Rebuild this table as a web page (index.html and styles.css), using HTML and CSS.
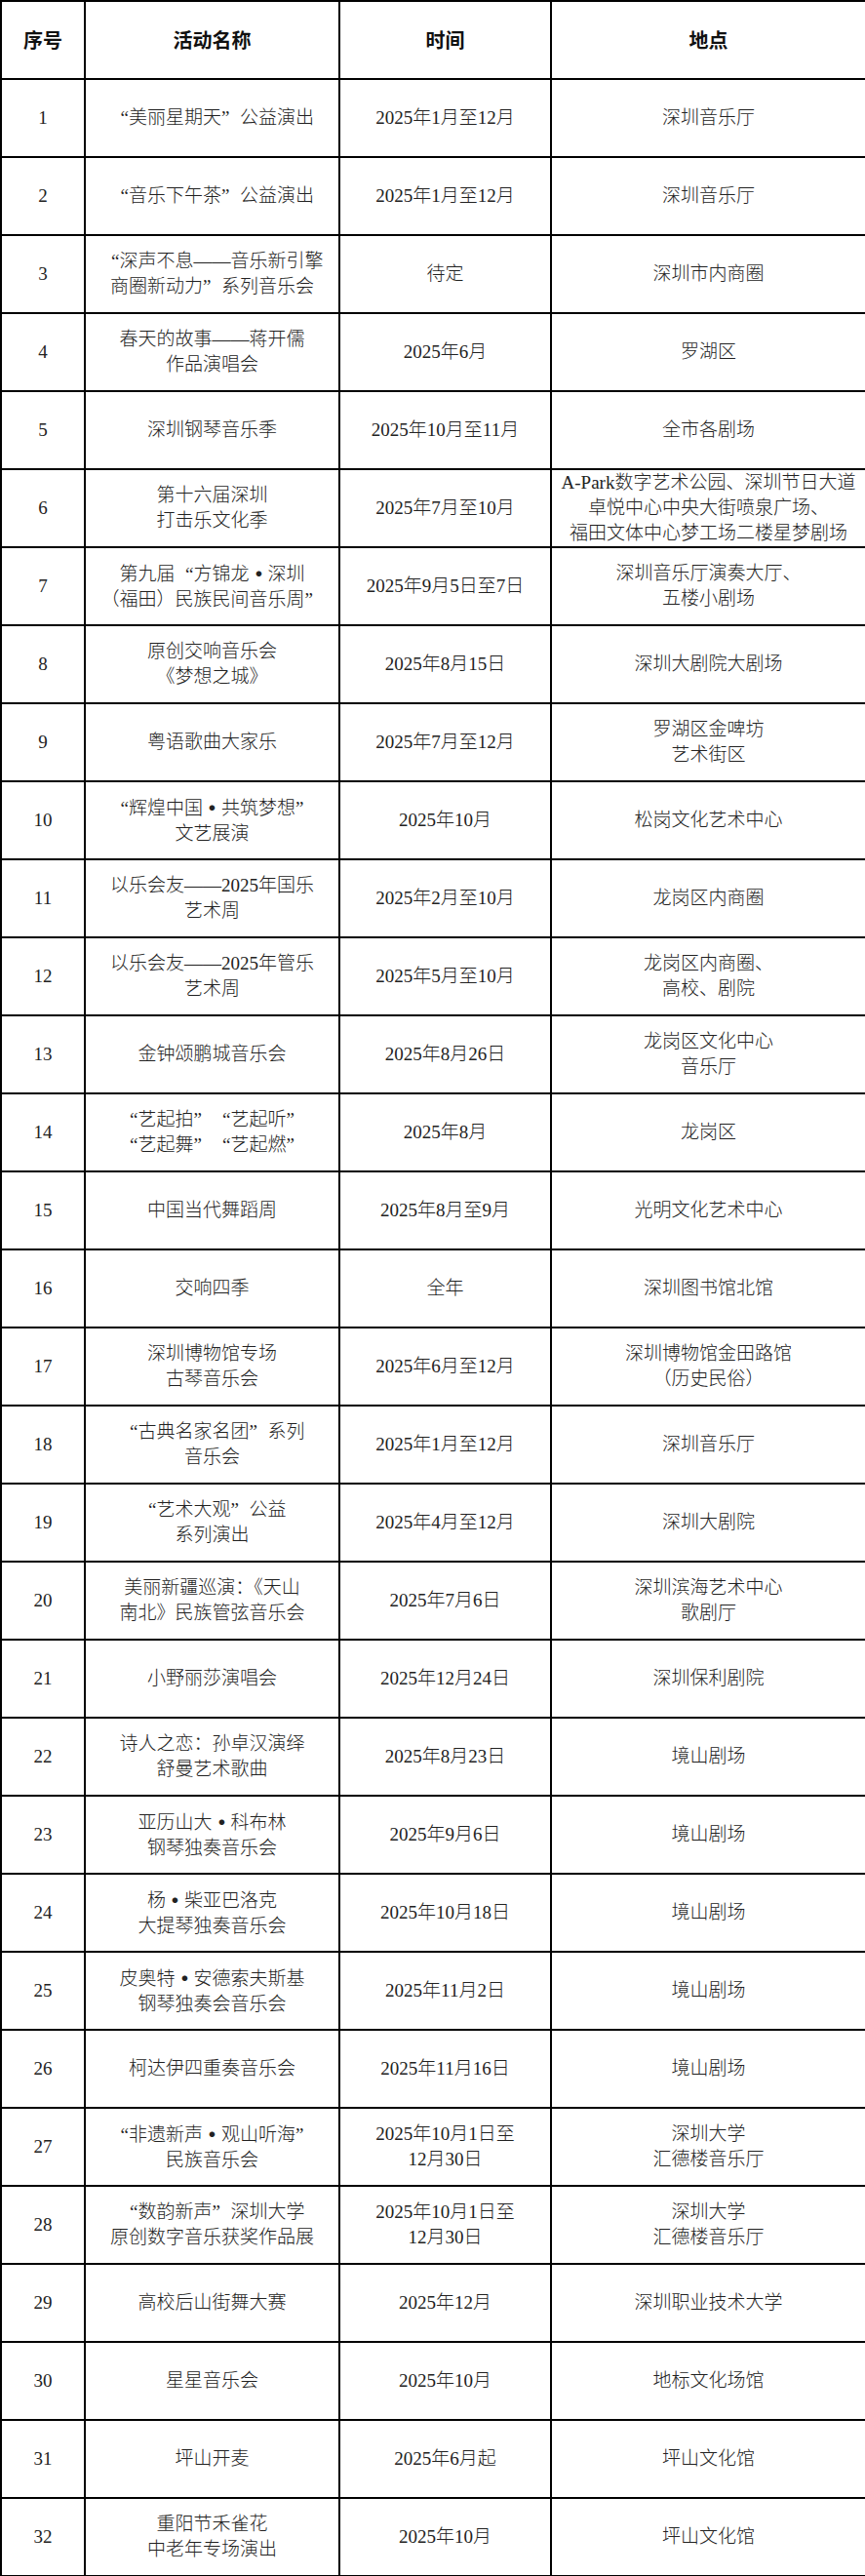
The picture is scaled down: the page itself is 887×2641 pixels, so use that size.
FILE: index.html
```html
<!DOCTYPE html>
<html lang="zh-CN">
<head>
<meta charset="utf-8">
<title>活动列表</title>
<link rel="stylesheet" href="styles.css">
</head>
<body>
<table class="events">
  <colgroup>
    <col class="c-no"><col class="c-name"><col class="c-time"><col class="c-place">
  </colgroup>
  <thead>
    <tr><th>序号</th><th>活动名称</th><th>时间</th><th>地点</th></tr>
  </thead>
  <tbody>
    <tr><td>1</td><td><span class="lq">“</span>美丽星期天<span class="rq">”</span>公益演出</td><td>2025年1月至12月</td><td>深圳音乐厅</td></tr>
    <tr><td>2</td><td><span class="lq">“</span>音乐下午茶<span class="rq">”</span>公益演出</td><td>2025年1月至12月</td><td>深圳音乐厅</td></tr>
    <tr><td>3</td><td><span class="lq">“</span>深声不息——音乐新引擎<br>商圈新动力<span class="rq">”</span>系列音乐会</td><td>待定</td><td>深圳市内商圈</td></tr>
    <tr><td>4</td><td>春天的故事——蒋开儒<br>作品演唱会</td><td>2025年6月</td><td>罗湖区</td></tr>
    <tr><td>5</td><td>深圳钢琴音乐季</td><td>2025年10月至11月</td><td>全市各剧场</td></tr>
    <tr><td>6</td><td>第十六届深圳<br>打击乐文化季</td><td>2025年7月至10月</td><td>A-Park数字艺术公园、深圳节日大道<br>卓悦中心中央大街喷泉广场、<br>福田文体中心梦工场二楼星梦剧场</td></tr>
    <tr><td>7</td><td>第九届<span class="lq">“</span>方锦龙<span class="dot">·</span>深圳<br>（福田）民族民间音乐周<span class="rq">”</span></td><td>2025年9月5日至7日</td><td>深圳音乐厅演奏大厅、<br>五楼小剧场</td></tr>
    <tr><td>8</td><td>原创交响音乐会<br>《梦想之城》</td><td>2025年8月15日</td><td>深圳大剧院大剧场</td></tr>
    <tr><td>9</td><td>粤语歌曲大家乐</td><td>2025年7月至12月</td><td>罗湖区金啤坊<br>艺术街区</td></tr>
    <tr><td>10</td><td><span class="lq">“</span>辉煌中国<span class="dot">·</span>共筑梦想<span class="rq">”</span><br>文艺展演</td><td>2025年10月</td><td>松岗文化艺术中心</td></tr>
    <tr><td>11</td><td>以乐会友——2025年国乐<br>艺术周</td><td>2025年2月至10月</td><td>龙岗区内商圈</td></tr>
    <tr><td>12</td><td>以乐会友——2025年管乐<br>艺术周</td><td>2025年5月至10月</td><td>龙岗区内商圈、<br>高校、剧院</td></tr>
    <tr><td>13</td><td>金钟颂鹏城音乐会</td><td>2025年8月26日</td><td>龙岗区文化中心<br>音乐厅</td></tr>
    <tr><td>14</td><td><span class="lq">“</span>艺起拍<span class="rq">”</span><span class="lq">“</span>艺起听<span class="rq">”</span><br><span class="lq">“</span>艺起舞<span class="rq">”</span><span class="lq">“</span>艺起燃<span class="rq">”</span></td><td>2025年8月</td><td>龙岗区</td></tr>
    <tr><td>15</td><td>中国当代舞蹈周</td><td>2025年8月至9月</td><td>光明文化艺术中心</td></tr>
    <tr><td>16</td><td>交响四季</td><td>全年</td><td>深圳图书馆北馆</td></tr>
    <tr><td>17</td><td>深圳博物馆专场<br>古琴音乐会</td><td>2025年6月至12月</td><td>深圳博物馆金田路馆<br>（历史民俗）</td></tr>
    <tr><td>18</td><td><span class="lq">“</span>古典名家名团<span class="rq">”</span>系列<br>音乐会</td><td>2025年1月至12月</td><td>深圳音乐厅</td></tr>
    <tr><td>19</td><td><span class="lq">“</span>艺术大观<span class="rq">”</span>公益<br>系列演出</td><td>2025年4月至12月</td><td>深圳大剧院</td></tr>
    <tr><td>20</td><td>美丽新疆巡演：《天山<br>南北》民族管弦音乐会</td><td>2025年7月6日</td><td>深圳滨海艺术中心<br>歌剧厅</td></tr>
    <tr><td>21</td><td>小野丽莎演唱会</td><td>2025年12月24日</td><td>深圳保利剧院</td></tr>
    <tr><td>22</td><td>诗人之恋：孙卓汉演绎<br>舒曼艺术歌曲</td><td>2025年8月23日</td><td>境山剧场</td></tr>
    <tr><td>23</td><td>亚历山大<span class="dot">·</span>科布林<br>钢琴独奏音乐会</td><td>2025年9月6日</td><td>境山剧场</td></tr>
    <tr><td>24</td><td>杨<span class="dot">·</span>柴亚巴洛克<br>大提琴独奏音乐会</td><td>2025年10月18日</td><td>境山剧场</td></tr>
    <tr><td>25</td><td>皮奥特<span class="dot">·</span>安德索夫斯基<br>钢琴独奏会音乐会</td><td>2025年11月2日</td><td>境山剧场</td></tr>
    <tr><td>26</td><td>柯达伊四重奏音乐会</td><td>2025年11月16日</td><td>境山剧场</td></tr>
    <tr><td>27</td><td><span class="lq">“</span>非遗新声<span class="dot">·</span>观山听海<span class="rq">”</span><br>民族音乐会</td><td>2025年10月1日至<br>12月30日</td><td>深圳大学<br>汇德楼音乐厅</td></tr>
    <tr><td>28</td><td><span class="lq">“</span>数韵新声<span class="rq">”</span>深圳大学<br>原创数字音乐获奖作品展</td><td>2025年10月1日至<br>12月30日</td><td>深圳大学<br>汇德楼音乐厅</td></tr>
    <tr><td>29</td><td>高校后山街舞大赛</td><td>2025年12月</td><td>深圳职业技术大学</td></tr>
    <tr><td>30</td><td>星星音乐会</td><td>2025年10月</td><td>地标文化场馆</td></tr>
    <tr><td>31</td><td>坪山开麦</td><td>2025年6月起</td><td>坪山文化馆</td></tr>
    <tr><td>32</td><td>重阳节禾雀花<br>中老年专场演出</td><td>2025年10月</td><td>坪山文化馆</td></tr>
  </tbody>
</table>
</body>
</html>
```
FILE: styles.css
```css
html, body {
  margin: 0;
  padding: 0;
  background: #fff;
}

.events {
  border-collapse: collapse;
  table-layout: fixed;
  width: 887px;
  font-family: "Liberation Serif", "Noto Sans CJK SC", serif;
  font-size: 19px;
  line-height: 26px;
  color: #222;
}

.c-no { width: 86px; }
.c-name { width: 261px; }
.c-time { width: 217px; }
.c-place { width: 323px; }

.events tr {
  height: 80px;
}

.events th,
.events td {
  border: 2px solid #000;
  padding: 0;
  text-align: center;
  vertical-align: middle;
  white-space: nowrap;
}

.events td {
  font-weight: 300;
}

.events th {
  font-family: "Noto Sans CJK SC", sans-serif;
  font-size: 20px;
  font-weight: 700;
  color: #111;
}

.lq,
.rq,
.dot {
  display: inline-block;
  width: 1em;
}

.lq { text-align: right; }
.rq { text-align: left; }
.dot {
  text-align: center;
  font-family: "Noto Sans CJK SC", sans-serif;
  font-weight: 700;
  transform: scale(1.15);
}
```
